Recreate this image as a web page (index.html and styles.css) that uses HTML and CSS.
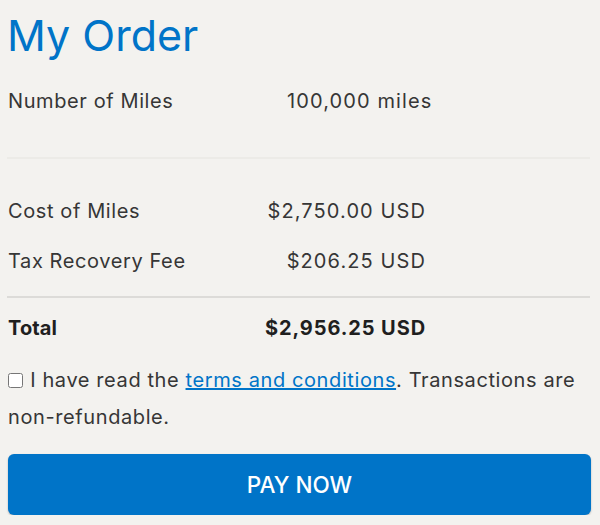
FILE: index.html
```html
<!DOCTYPE html>
<html lang="en">
<head>
<meta charset="utf-8">
<title>My Order</title>
<link rel="stylesheet" href="styles.css">
</head>
<body>
<main class="order">
  <h1 class="title">My Order</h1>
  <div class="row">
    <span class="label">Number of Miles</span>
    <span class="value value-miles">100,000 miles</span>
  </div>
  <hr class="sep sep-light">
  <div class="row row-first">
    <span class="label">Cost of Miles</span>
    <span class="value">$2,750.00 USD</span>
  </div>
  <div class="row">
    <span class="label">Tax Recovery Fee</span>
    <span class="value">$206.25 USD</span>
  </div>
  <hr class="sep sep-dark">
  <div class="row row-total">
    <span class="label">Total</span>
    <span class="value">$2,956.25 USD</span>
  </div>
  <p class="terms"><input type="checkbox" class="check"> I have read the <a href="#" class="link">terms and conditions</a>. Transactions are <span class="nowrap">non-refundable.</span></p>
  <button class="pay">PAY NOW</button>
</main>
</body>
</html>
```
FILE: styles.css
```css
html, body {
  margin: 0;
  padding: 0;
  background: #f3f2ef;
}
body {
  font-family: Inter, "Open Sans", "Liberation Sans", sans-serif;
  color: #363636;
}
.order {
  margin: 0 10px 0 7px;
}
.title {
  margin: 0 0 6px 0;
  font-size: 43px;
  line-height: 70px;
  font-weight: 400;
  color: #0074c8;
}
.row {
  display: flex;
  height: 50px;
  line-height: 50px;
  font-size: 20px;
  padding-left: 1px;
}
.label {
  width: 250px;
  letter-spacing: 0.6px;
}
.value {
  width: 168px;
  text-align: right;
  letter-spacing: 1.1px;
}
.value-miles {
  text-align: left;
  padding-left: 29px;
}
.sep {
  border: 0;
  height: 2px;
  margin: 31px 0 0 0;
}
.sep-light {
  background: #ecebe7;
}
.row-first {
  margin-top: 27px;
}
.sep-dark {
  background: #dcdbd8;
  margin: 10px 0 5px 0;
}
.row-total {
  font-weight: 700;
  color: #1f1f1f;
}
.row-total .label {
  letter-spacing: 0.1px;
}
.row-total .value {
  letter-spacing: 0.9px;
}
.terms {
  margin: 9px 0 0 1px;
  font-size: 20px;
  line-height: 37px;
  letter-spacing: 0.6px;
}
.nowrap {
  white-space: nowrap;
}
.check {
  width: 15px;
  height: 15px;
  margin: 0 1px 0 0;
  vertical-align: -1px;
}
.link {
  color: #0074c8;
}
.pay {
  display: block;
  width: 583px;
  height: 61px;
  margin: 18px 0 0 1px;
  border: 0;
  border-radius: 6px;
  background: #0074c8;
  color: #fff;
  font-family: Inter, "Open Sans", "Liberation Sans", sans-serif;
  font-size: 22.5px;
  font-weight: 500;
  box-shadow: 0 1px 2px rgba(0,0,0,0.25);
}
```
